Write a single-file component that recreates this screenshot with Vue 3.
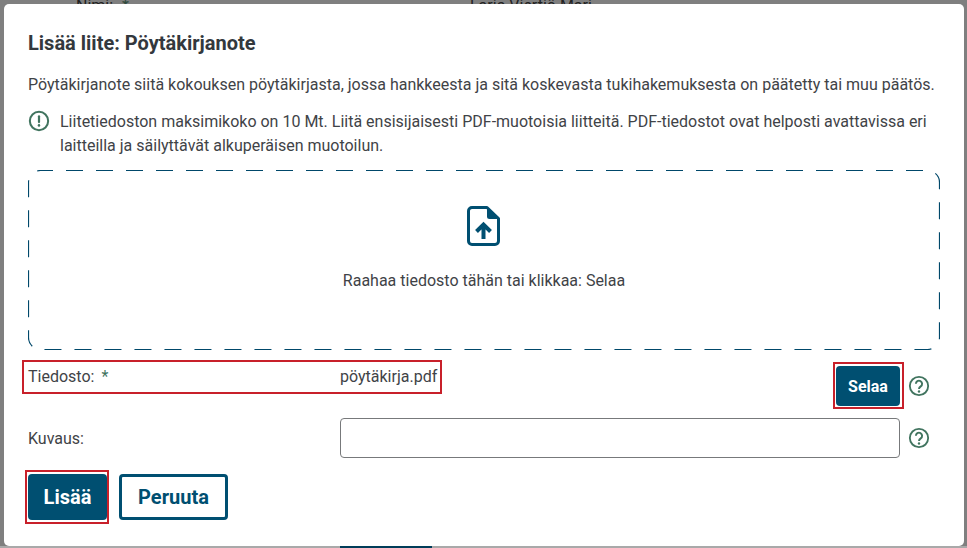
<script setup>
const intro = 'Pöytäkirjanote siitä kokouksen pöytäkirjasta, jossa hankkeesta ja sitä koskevasta tukihakemuksesta on päätetty tai muu päätös.'
const notice = 'Liitetiedoston maksimikoko on 10 Mt. Liitä ensisijaisesti PDF-muotoisia liitteitä. PDF-tiedostot ovat helposti avattavissa eri laitteilla ja säilyttävät alkuperäisen muotoilun.'
</script>

<template>
  <div class="page">
    <div class="behind">
      <span class="behind-label">Nimi:<span class="behind-star">*</span></span>
      <span class="behind-value">Laria Viertiö Mari</span>
      <span class="behind-tab"></span>
    </div>
    <div class="modal">
      <h2 class="title">Lisää liite: Pöytäkirjanote</h2>
      <p class="intro">{{ intro }}</p>
      <div class="notice">
        <svg class="notice-icon" viewBox="0 0 24 24" fill="none">
          <circle cx="12" cy="12" r="10" stroke="#41745f" stroke-width="2.2" />
          <path d="M12 6.8v6.4" stroke="#41745f" stroke-width="2.4" stroke-linecap="round" />
          <circle cx="12" cy="16.8" r="1.4" fill="#41745f" />
        </svg>
        <p class="notice-text">{{ notice }}</p>
      </div>
      <div class="dropzone">
        <svg class="dash" width="912" height="180" viewBox="0 0 912 180" fill="none">
          <rect x="0.5" y="0.5" width="911" height="179" rx="12" stroke="#00486a" stroke-width="1.2" stroke-dasharray="17 13" stroke-dashoffset="4.5" />
        </svg>
        <svg class="upload" width="33" height="40" viewBox="0 0 33 40" fill="none">
          <path d="M5 1.5h15L31.5 12.5V35a3.5 3.5 0 0 1-3.5 3.5H5A3.5 3.5 0 0 1 1.5 35V5A3.5 3.5 0 0 1 5 1.5z" stroke="#004f71" stroke-width="3" stroke-linejoin="round" />
          <path d="M20 1.5L31.5 13H22.5a2.5 2.5 0 0 1-2.5-2.5z" fill="#004f71" />
          <path d="M9.5 25.5l7-7 7 7M16.5 19.5V33" stroke="#004f71" stroke-width="4" />
        </svg>
        <p class="drop-text">Raahaa tiedosto tähän tai klikkaa: Selaa</p>
      </div>
      <div class="file-row">
        <div class="file-box">
          <span class="file-label">Tiedosto:<span class="star">*</span></span>
          <span class="file-name">pöytäkirja.pdf</span>
        </div>
        <div class="file-actions">
          <span class="marked"><button class="btn small" type="button">Selaa</button></span>
          <svg class="help" viewBox="0 0 24 24" fill="none">
            <circle cx="12" cy="12" r="10" stroke="#41745f" stroke-width="2" />
            <path d="M8.6 9.6a3.4 3.4 0 1 1 5.3 2.8c-1.2.8-1.9 1.4-1.9 2.8" stroke="#41745f" stroke-width="2.1" />
            <circle cx="12" cy="18" r="1.3" fill="#41745f" />
          </svg>
        </div>
      </div>
      <div class="desc-row">
        <label class="desc-label" for="kuvaus">Kuvaus:</label>
        <input id="kuvaus" class="desc-input" type="text" />
        <svg class="help" viewBox="0 0 24 24" fill="none">
          <circle cx="12" cy="12" r="10" stroke="#41745f" stroke-width="2" />
          <path d="M8.6 9.6a3.4 3.4 0 1 1 5.3 2.8c-1.2.8-1.9 1.4-1.9 2.8" stroke="#41745f" stroke-width="2.1" />
          <circle cx="12" cy="18" r="1.3" fill="#41745f" />
        </svg>
      </div>
      <div class="actions">
        <span class="marked large"><button class="btn" type="button">Lisää</button></span>
        <button class="btn outline" type="button">Peruuta</button>
      </div>
    </div>
  </div>
</template>

<style>
html, body { margin: 0; background: #7f7f7f; }
</style>

<style scoped>
.page {
  position: relative;
  width: 967px;
  height: 548px;
  box-sizing: border-box;
  padding: 4px 3px 2px 4px;
  overflow: hidden;
  background: #7f7f7f;
  font-family: Roboto, "Liberation Sans", sans-serif;
  color: #3f4347;
}
.behind { position: absolute; inset: 0; font-size: 16px; color: #222; }
.behind::after {
  content: "";
  position: absolute;
  left: 0;
  right: 0;
  bottom: 0;
  height: 2px;
  background: #a9a9a9;
}
.behind-label { position: absolute; left: 76px; top: -4px; }
.behind-star { margin-left: 9px; color: #2f4a3c; }
.behind-value { position: absolute; left: 470px; top: -4px; }
.behind-tab {
  position: absolute;
  z-index: 1;
  left: 340px;
  bottom: 0;
  width: 92px;
  height: 2px;
  background: #003d59;
}
.modal {
  position: relative;
  height: 100%;
  box-sizing: border-box;
  padding: 26px 24px 0;
  background: #fff;
  border-radius: 5px;
}
.title {
  margin: 0;
  font-size: 20px;
  line-height: 26px;
  font-weight: 700;
  color: #33383d;
}
.intro { margin: 17px 0 0; font-size: 16px; line-height: 24px; white-space: nowrap; }
.notice { display: flex; gap: 10px; margin-top: 13px; }
.notice-icon { flex: none; width: 22px; height: 22px; }
.notice-text { margin: 0; width: 880px; font-size: 16px; line-height: 24px; }
.dropzone {
  position: relative;
  box-sizing: border-box;
  width: 912px;
  height: 180px;
  margin-top: 12px;
  padding-top: 36px;
  text-align: center;
}
.dash { position: absolute; left: 0; top: 0; }
.upload { display: block; margin-left: 439px; }
.drop-text { margin: 23px 0 0; font-size: 16px; line-height: 24px; }
.file-row {
  display: flex;
  justify-content: space-between;
  align-items: flex-start;
  box-sizing: border-box;
  height: 68px;
  margin-left: -6px;
  padding-top: 10px;
}
.file-box {
  display: flex;
  box-sizing: border-box;
  width: 420px;
  height: 34px;
  padding: 3px 0 0 4px;
  border: 2px solid #c8202a;
  font-size: 16px;
  line-height: 24px;
}
.file-label { width: 312px; flex: none; }
.star { margin-left: 7px; color: #41745f; }
.file-actions { display: flex; align-items: center; gap: 4px; margin-top: 2px; margin-right: 10px; }
.marked { display: block; box-sizing: border-box; padding: 2px 2px 1px 1px; border: 2px solid #c8202a; line-height: 0; }
.btn {
  box-sizing: border-box;
  height: 46px;
  padding: 0 15px;
  border: 0;
  border-radius: 4px;
  background: #004f71;
  color: #fff;
  font-family: inherit;
  font-size: 20px;
  font-weight: 700;
}
.small { width: 64px; height: 40px; padding: 0; font-size: 16px; }
.help { flex: none; width: 22px; height: 22px; }
.desc-row { display: flex; align-items: center; height: 40px; }
.desc-label { width: 312px; flex: none; font-size: 16px; }
.desc-input {
  box-sizing: border-box;
  width: 560px;
  height: 40px;
  margin-right: 8px;
  border: 1px solid #77797b;
  border-radius: 4px;
  background: #fff;
}
.actions { display: flex; align-items: flex-start; gap: 10px; margin-top: 12px; margin-left: -3px; }
.large { padding: 2px 0 2px 1px; width: 84px; }
.large .btn { width: 79px; }
.outline { width: 109px; margin-top: 4px; background: #fff; color: #004f71; border: 3px solid #004f71; }
</style>
